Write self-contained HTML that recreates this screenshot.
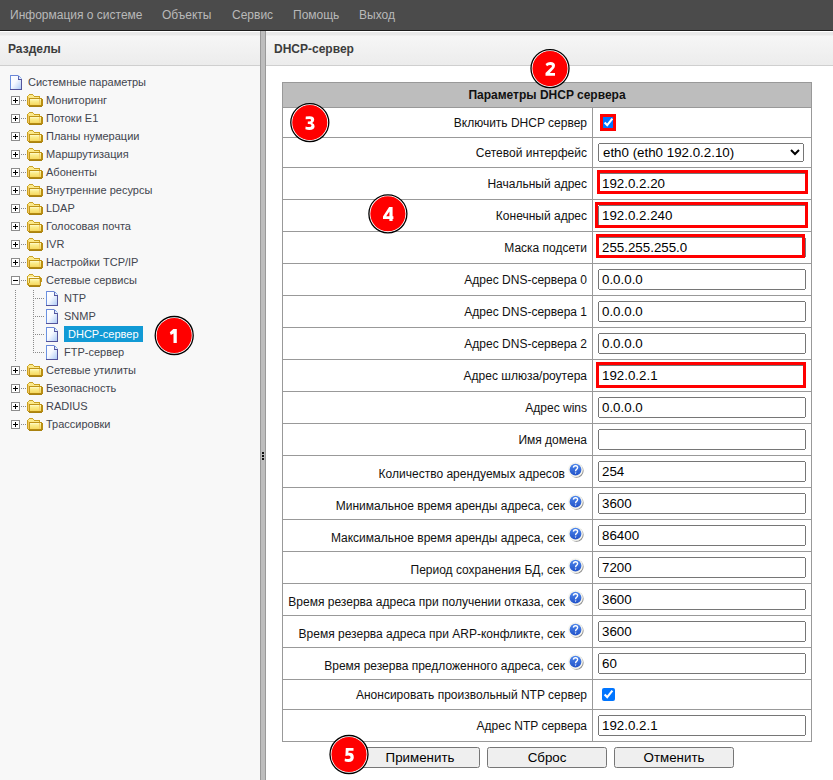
<!DOCTYPE html>
<html><head><meta charset="utf-8">
<style>
*{box-sizing:border-box}
html,body{margin:0;padding:0;width:833px;height:780px;overflow:hidden;background:#fff;font-family:"Liberation Sans",sans-serif}
#top{position:absolute;left:0;top:0;width:833px;height:31px;background:#4b4b4b;border-bottom:1px solid #1c1c1c}
#top span{position:absolute;top:8px;font-size:12px;color:#b9b9b9;line-height:15px}
#left{position:absolute;left:0;top:31px;width:260px;height:749px;background:#f8f8f8}
#right{position:absolute;left:266px;top:31px;width:567px;height:749px;background:#fff}
.ph{position:absolute;left:0;top:0;right:0;height:35px;border-top:1px solid #fff;border-bottom:1px solid #cfcfcf;background:linear-gradient(#e9e9e9 0,#e9e9e9 3px,#f6f6f6 4px,#ececec 100%)}
.ph b{position:absolute;left:8px;top:10px;font-size:12px;color:#3c3c3c;line-height:14px}
#split{position:absolute;left:260px;top:31px;width:6px;height:749px;background:#bdbdbd;border-left:1px solid #999;border-right:1px solid #999}
#split i{position:absolute;left:1px;width:2px;height:2px;background:#111}
.ic{position:absolute;overflow:visible}
.tt{position:absolute;font-size:11px;line-height:18px;color:#42454e;white-space:nowrap}
.tt.sel{background:#119ad5;color:#fff;line-height:16px;height:16px;padding:0 4px;width:79px}
.dh{position:absolute;height:1px;background:repeating-linear-gradient(to right,#8a8a8a 0 1px,transparent 1px 2px)}
.dv{position:absolute;width:1px;background:repeating-linear-gradient(to bottom,#8a8a8a 0 1px,transparent 1px 2px)}
#tbl{position:absolute;left:282px;top:82px;width:530px;height:660px;border:1px solid #999}
#tbl .hd{position:absolute;left:0;top:0;width:528px;height:25px;background:#bdbdbd;text-align:center;font-weight:bold;font-size:12px;line-height:25px;color:#111}
.hl{position:absolute;left:282px;width:530px;height:1px;background:#999}
.vl{position:absolute;left:592px;top:107px;width:1px;height:634px;background:#999}
.lb{position:absolute;left:283px;width:309px;padding-right:5px;display:flex;line-height:14px;align-items:center;justify-content:flex-end;font-size:12px;color:#111;white-space:nowrap}
.lbh{align-items:flex-start;padding-top:11px}
.hp{margin-left:3px;margin-right:3px;position:relative;top:-5px;flex:none}
input.cb{position:absolute;left:598px;margin:0 0 0 4px;width:13px;height:13px}
input,select,button{font-family:"Liberation Sans",sans-serif;font-size:13.3333px}
input.in{position:absolute;left:598px;width:208px;height:21px;box-sizing:border-box}
select.sl{position:absolute;left:598px;width:206px;height:19px;box-sizing:border-box}
button.bt{position:absolute;top:747px;width:120px;height:21px;box-sizing:border-box}
.bdg{position:absolute;width:39px;height:39px;border-radius:50%;background:#f00;border:2px solid #222;box-shadow:inset 0 0 0 1px #fff;color:#fff;font-weight:bold;font-size:19px;line-height:35px;text-align:center}
.rb{position:absolute;border:3px solid #f00}
</style></head><body>
<svg width="0" height="0" style="position:absolute">
<defs>
<linearGradient id="gd" x1="0" y1="0" x2="1" y2="1"><stop offset="0" stop-color="#fff"/><stop offset="0.45" stop-color="#f6f9ff"/><stop offset="1" stop-color="#aecbf6"/></linearGradient>
<linearGradient id="gf" x1="0" y1="0" x2="0" y2="1"><stop offset="0" stop-color="#fffbd0"/><stop offset="0.3" stop-color="#fbee90"/><stop offset="1" stop-color="#f6d85e"/></linearGradient>
<linearGradient id="gh" x1="0" y1="0" x2="0" y2="1"><stop offset="0" stop-color="#4d86ec"/><stop offset="1" stop-color="#2152c8"/></linearGradient>
<symbol id="doc" viewBox="0 0 12 15" shape-rendering="crispEdges"><path d="M1 1 H8 V4 H11 V14 H1 Z" fill="url(#gd)"/><rect x="0" y="0" width="8" height="1" fill="#6c86d6"/><rect x="0" y="0" width="1" height="15" fill="#6b92e2"/><rect x="0" y="14" width="12" height="1" fill="#52529a"/><rect x="11" y="4" width="1" height="10" fill="#54549c"/><rect x="8" y="1" width="1" height="3" fill="#5c68b4"/><rect x="8" y="4" width="4" height="1" fill="#54549c"/><rect x="8" y="0" width="1" height="1" fill="#a9c0ee"/><rect x="9" y="1" width="1" height="1" fill="#7fa6ec"/><rect x="10" y="2" width="1" height="1" fill="#8fb2ee"/><rect x="11" y="3" width="1" height="1" fill="#b9cff2"/><rect x="9" y="2" width="1" height="2" fill="#dfe9fb"/><rect x="10" y="3" width="1" height="1" fill="#e8effc"/></symbol>
<symbol id="plus" viewBox="0 0 9 9"><rect x="0.5" y="0.5" width="8" height="8" fill="#fff" stroke="#8c8c8c"/><path d="M2 4.5 H7 M4.5 2 V7" stroke="#000" stroke-width="1"/></symbol>
<symbol id="minus" viewBox="0 0 9 9"><rect x="0.5" y="0.5" width="8" height="8" fill="#fff" stroke="#8c8c8c"/><path d="M2 4.5 H7" stroke="#000" stroke-width="1"/></symbol>
<symbol id="fold" viewBox="0 0 16 13" shape-rendering="crispEdges"><path d="M1 2 H2 V1 H6 V2 H7 V3 H12 V4 H13 V11 H1 Z" fill="#fbe98a"/><rect x="2" y="0" width="4" height="1" fill="#c9a228"/><rect x="1" y="1" width="1" height="1" fill="#d3ad3a"/><rect x="6" y="1" width="1" height="1" fill="#d3ad3a"/><rect x="0" y="2" width="1" height="9" fill="#c9a020"/><rect x="7" y="2" width="6" height="1" fill="#c9a020"/><rect x="12" y="3" width="1" height="1" fill="#c9a020"/><rect x="1" y="3" width="1" height="8" fill="#f5c860"/><rect x="2" y="4" width="13" height="1" fill="#bf9418"/><rect x="3" y="5" width="11" height="6" fill="url(#gf)"/><rect x="2" y="5" width="1" height="6" fill="#c49a1c"/><rect x="14" y="5" width="2" height="6" fill="#b98e14"/><rect x="12" y="5" width="1" height="6" fill="#f3cf6a"/><rect x="1" y="11" width="15" height="1" fill="#b48a12"/><rect x="2" y="12" width="13" height="1" fill="#a98210"/></symbol>
<symbol id="fopen" viewBox="0 0 16 13" shape-rendering="crispEdges"><path d="M1 2 H2 V1 H6 V2 H7 V3 H12 V4 H13 V11 H1 Z" fill="#fbe98a"/><rect x="2" y="0" width="4" height="1" fill="#c9a228"/><rect x="1" y="1" width="1" height="1" fill="#d3ad3a"/><rect x="6" y="1" width="1" height="1" fill="#d3ad3a"/><rect x="0" y="2" width="1" height="9" fill="#c9a020"/><rect x="7" y="2" width="6" height="1" fill="#c9a020"/><rect x="12" y="3" width="2" height="1" fill="#c9a020"/><rect x="1" y="3" width="11" height="1" fill="#fffbe0"/><rect x="2" y="4" width="12" height="1" fill="#bf9418"/><rect x="14" y="4" width="1" height="4" fill="#c49a1c"/><path d="M3 5 H13 V11 H2 V9 H3 Z" fill="url(#gf)"/><rect x="2" y="5" width="1" height="4" fill="#c49a1c"/><rect x="1" y="9" width="1" height="2" fill="#c49a1c"/><rect x="13" y="5" width="1" height="7" fill="#b98e14"/><rect x="12" y="5" width="1" height="6" fill="#f3cf6a"/><rect x="1" y="11" width="13" height="1" fill="#b48a12"/><rect x="2" y="12" width="11" height="1" fill="#a98210"/></symbol>
<symbol id="help" viewBox="0 0 16 16"><circle cx="8.6" cy="8.8" r="7" fill="#6a6a6a" opacity="0.75"/><circle cx="7.5" cy="7.7" r="7.4" fill="#f4f4ee"/><circle cx="7.5" cy="7.7" r="5.9" fill="url(#gh)"/><path d="M5.4 5.6 Q5.5 3.7 7.6 3.7 Q9.6 3.7 9.6 5.5 Q9.6 6.6 8.5 7.3 Q7.6 7.9 7.6 9.2" fill="none" stroke="#fff" stroke-width="1.4"/><path d="M6.7 10.4 H8.5 L7.6 12 Z" fill="#fff"/></symbol>
</defs>
</svg>
<div id="top">
<span style="left:10px">Информация о системе</span>
<span style="left:162px">Объекты</span>
<span style="left:232px">Сервис</span>
<span style="left:293px">Помощь</span>
<span style="left:359px">Выход</span>
</div>
<div id="left">
<div class="ph"><b>Разделы</b></div>
</div>
<div id="split"><i style="top:421px"></i><i style="top:424px"></i><i style="top:427px"></i></div>
<div id="right">
<div class="ph"><b>DHCP-сервер</b></div>
</div>
<svg class="ic" style="left:10px;top:75px" width="12" height="15"><use href="#doc"/></svg><span class="tt" style="left:28px;top:73px">Системные параметры</span>
<svg class="ic" style="left:11px;top:96px" width="9" height="9"><use href="#plus"/></svg><i class="dh" style="left:21px;top:100px;width:6px"></i><svg class="ic" style="left:27px;top:94px" width="16" height="13"><use href="#fold"/></svg><span class="tt" style="left:46px;top:91px">Мониторинг</span>
<svg class="ic" style="left:11px;top:114px" width="9" height="9"><use href="#plus"/></svg><i class="dh" style="left:21px;top:118px;width:6px"></i><svg class="ic" style="left:27px;top:112px" width="16" height="13"><use href="#fold"/></svg><span class="tt" style="left:46px;top:109px">Потоки E1</span>
<svg class="ic" style="left:11px;top:132px" width="9" height="9"><use href="#plus"/></svg><i class="dh" style="left:21px;top:136px;width:6px"></i><svg class="ic" style="left:27px;top:130px" width="16" height="13"><use href="#fold"/></svg><span class="tt" style="left:46px;top:127px">Планы нумерации</span>
<svg class="ic" style="left:11px;top:150px" width="9" height="9"><use href="#plus"/></svg><i class="dh" style="left:21px;top:154px;width:6px"></i><svg class="ic" style="left:27px;top:148px" width="16" height="13"><use href="#fold"/></svg><span class="tt" style="left:46px;top:145px">Маршрутизация</span>
<svg class="ic" style="left:11px;top:168px" width="9" height="9"><use href="#plus"/></svg><i class="dh" style="left:21px;top:172px;width:6px"></i><svg class="ic" style="left:27px;top:166px" width="16" height="13"><use href="#fold"/></svg><span class="tt" style="left:46px;top:163px">Абоненты</span>
<svg class="ic" style="left:11px;top:186px" width="9" height="9"><use href="#plus"/></svg><i class="dh" style="left:21px;top:190px;width:6px"></i><svg class="ic" style="left:27px;top:184px" width="16" height="13"><use href="#fold"/></svg><span class="tt" style="left:46px;top:181px">Внутренние ресурсы</span>
<svg class="ic" style="left:11px;top:204px" width="9" height="9"><use href="#plus"/></svg><i class="dh" style="left:21px;top:208px;width:6px"></i><svg class="ic" style="left:27px;top:202px" width="16" height="13"><use href="#fold"/></svg><span class="tt" style="left:46px;top:199px">LDAP</span>
<svg class="ic" style="left:11px;top:222px" width="9" height="9"><use href="#plus"/></svg><i class="dh" style="left:21px;top:226px;width:6px"></i><svg class="ic" style="left:27px;top:220px" width="16" height="13"><use href="#fold"/></svg><span class="tt" style="left:46px;top:217px">Голосовая почта</span>
<svg class="ic" style="left:11px;top:240px" width="9" height="9"><use href="#plus"/></svg><i class="dh" style="left:21px;top:244px;width:6px"></i><svg class="ic" style="left:27px;top:238px" width="16" height="13"><use href="#fold"/></svg><span class="tt" style="left:46px;top:235px">IVR</span>
<svg class="ic" style="left:11px;top:258px" width="9" height="9"><use href="#plus"/></svg><i class="dh" style="left:21px;top:262px;width:6px"></i><svg class="ic" style="left:27px;top:256px" width="16" height="13"><use href="#fold"/></svg><span class="tt" style="left:46px;top:253px">Настройки TCP/IP</span>
<svg class="ic" style="left:11px;top:276px" width="9" height="9"><use href="#minus"/></svg><i class="dh" style="left:21px;top:280px;width:6px"></i><svg class="ic" style="left:27px;top:274px" width="16" height="13"><use href="#fopen"/></svg><span class="tt" style="left:46px;top:271px">Сетевые сервисы</span>
<i class="dh" style="left:35px;top:298px;width:9px"></i><svg class="ic" style="left:46px;top:291px" width="12" height="15"><use href="#doc"/></svg>
<span class="tt" style="left:64px;top:289px">NTP</span>
<i class="dh" style="left:35px;top:316px;width:9px"></i><svg class="ic" style="left:46px;top:309px" width="12" height="15"><use href="#doc"/></svg>
<span class="tt" style="left:64px;top:307px">SNMP</span>
<i class="dh" style="left:35px;top:334px;width:9px"></i><svg class="ic" style="left:46px;top:327px" width="12" height="15"><use href="#doc"/></svg>
<span class="tt sel" style="left:64px;top:326px">DHCP-сервер</span>
<i class="dh" style="left:35px;top:352px;width:9px"></i><svg class="ic" style="left:46px;top:345px" width="12" height="15"><use href="#doc"/></svg>
<span class="tt" style="left:64px;top:343px">FTP-сервер</span>
<svg class="ic" style="left:11px;top:366px" width="9" height="9"><use href="#plus"/></svg><i class="dh" style="left:21px;top:370px;width:6px"></i><svg class="ic" style="left:27px;top:364px" width="16" height="13"><use href="#fold"/></svg><span class="tt" style="left:46px;top:361px">Сетевые утилиты</span>
<svg class="ic" style="left:11px;top:384px" width="9" height="9"><use href="#plus"/></svg><i class="dh" style="left:21px;top:388px;width:6px"></i><svg class="ic" style="left:27px;top:382px" width="16" height="13"><use href="#fold"/></svg><span class="tt" style="left:46px;top:379px">Безопасность</span>
<svg class="ic" style="left:11px;top:402px" width="9" height="9"><use href="#plus"/></svg><i class="dh" style="left:21px;top:406px;width:6px"></i><svg class="ic" style="left:27px;top:400px" width="16" height="13"><use href="#fold"/></svg><span class="tt" style="left:46px;top:397px">RADIUS</span>
<svg class="ic" style="left:11px;top:420px" width="9" height="9"><use href="#plus"/></svg><i class="dh" style="left:21px;top:424px;width:6px"></i><svg class="ic" style="left:27px;top:418px" width="16" height="13"><use href="#fold"/></svg><span class="tt" style="left:46px;top:415px">Трассировки</span>
<i class="dv" style="left:15px;top:290px;height:72px"></i>
<i class="dv" style="left:33px;top:290px;height:63px"></i>
<div id="tbl"><div class="hd">Параметры DHCP сервера</div></div>
<i class="vl"></i>
<i class="hl" style="top:107px"></i>
<div class="lb" style="top:108px;height:29px"><span>Включить DHCP сервер</span></div>
<input type="checkbox" checked class="cb" style="top:116px">
<i class="hl" style="top:137px"></i>
<div class="lb" style="top:138px;height:29px"><span>Сетевой интерфейс</span></div>
<select class="sl" style="top:143px"><option>eth0 (eth0 192.0.2.10)</option></select>
<i class="hl" style="top:167px"></i>
<div class="lb" style="top:168px;height:31px"><span>Начальный адрес</span></div>
<input class="in" style="top:173px" value="192.0.2.20">
<i class="hl" style="top:199px"></i>
<div class="lb" style="top:200px;height:31px"><span>Конечный адрес</span></div>
<input class="in" style="top:205px" value="192.0.2.240">
<i class="hl" style="top:231px"></i>
<div class="lb" style="top:232px;height:31px"><span>Маска подсети</span></div>
<input class="in" style="top:237px" value="255.255.255.0">
<i class="hl" style="top:263px"></i>
<div class="lb" style="top:264px;height:31px"><span>Адрес DNS-сервера 0</span></div>
<input class="in" style="top:269px" value="0.0.0.0">
<i class="hl" style="top:295px"></i>
<div class="lb" style="top:296px;height:31px"><span>Адрес DNS-сервера 1</span></div>
<input class="in" style="top:301px" value="0.0.0.0">
<i class="hl" style="top:327px"></i>
<div class="lb" style="top:328px;height:31px"><span>Адрес DNS-сервера 2</span></div>
<input class="in" style="top:333px" value="0.0.0.0">
<i class="hl" style="top:359px"></i>
<div class="lb" style="top:360px;height:31px"><span>Адрес шлюза/роутера</span></div>
<input class="in" style="top:365px" value="192.0.2.1">
<i class="hl" style="top:391px"></i>
<div class="lb" style="top:392px;height:31px"><span>Адрес wins</span></div>
<input class="in" style="top:397px" value="0.0.0.0">
<i class="hl" style="top:423px"></i>
<div class="lb" style="top:424px;height:31px"><span>Имя домена</span></div>
<input class="in" style="top:429px" value="">
<i class="hl" style="top:455px"></i>
<div class="lb lbh" style="top:456px;height:31px"><span>Количество арендуемых адресов</span><svg class="hp" width="16" height="16"><use href="#help"/></svg></div>
<input class="in" style="top:461px" value="254">
<i class="hl" style="top:487px"></i>
<div class="lb lbh" style="top:488px;height:31px"><span>Минимальное время аренды адреса, сек</span><svg class="hp" width="16" height="16"><use href="#help"/></svg></div>
<input class="in" style="top:493px" value="3600">
<i class="hl" style="top:519px"></i>
<div class="lb lbh" style="top:520px;height:31px"><span>Максимальное время аренды адреса, сек</span><svg class="hp" width="16" height="16"><use href="#help"/></svg></div>
<input class="in" style="top:525px" value="86400">
<i class="hl" style="top:551px"></i>
<div class="lb lbh" style="top:552px;height:31px"><span>Период сохранения БД, сек</span><svg class="hp" width="16" height="16"><use href="#help"/></svg></div>
<input class="in" style="top:557px" value="7200">
<i class="hl" style="top:583px"></i>
<div class="lb lbh" style="top:584px;height:31px"><span>Время резерва адреса при получении отказа, сек</span><svg class="hp" width="16" height="16"><use href="#help"/></svg></div>
<input class="in" style="top:589px" value="3600">
<i class="hl" style="top:615px"></i>
<div class="lb lbh" style="top:616px;height:31px"><span>Время резерва адреса при ARP-конфликте, сек</span><svg class="hp" width="16" height="16"><use href="#help"/></svg></div>
<input class="in" style="top:621px" value="3600">
<i class="hl" style="top:647px"></i>
<div class="lb lbh" style="top:648px;height:31px"><span>Время резерва предложенного адреса, сек</span><svg class="hp" width="16" height="16"><use href="#help"/></svg></div>
<input class="in" style="top:653px" value="60">
<i class="hl" style="top:679px"></i>
<div class="lb" style="top:680px;height:29px"><span>Анонсировать произвольный NTP сервер</span></div>
<input type="checkbox" checked class="cb" style="top:688px">
<i class="hl" style="top:709px"></i>
<div class="lb" style="top:710px;height:31px"><span>Адрес NTP сервера</span></div>
<input class="in" style="top:715px" value="192.0.2.1">
<i class="hl" style="top:741px"></i>
<button class="bt" style="left:360px">Применить</button>
<button class="bt" style="left:487px">Сброс</button>
<button class="bt" style="left:614px">Отменить</button>
<div class="rb" style="left:600px;top:114px;width:16px;height:17px"></div>
<div class="rb" style="left:597px;top:170px;width:211px;height:24px"></div>
<div class="rb" style="left:595px;top:202px;width:213px;height:26px"></div>
<div class="rb" style="left:596px;top:234px;width:209px;height:24px"></div>
<div class="rb" style="left:596px;top:362px;width:210px;height:26px"></div>
<svg style="position:absolute;left:0;top:0" width="833" height="780">
<g fill="#f00" stroke="#fff" stroke-width="1.1">
<circle cx="174.2" cy="335.5" r="18.1"/>
<circle cx="550" cy="68.6" r="18.1"/>
<circle cx="309.8" cy="122.6" r="18.1"/>
<circle cx="387.9" cy="213.8" r="18.1"/>
<circle cx="349" cy="754.5" r="18.1"/>
</g>
<g fill="none" stroke="#000" stroke-width="1.3">
<circle cx="174.2" cy="335.5" r="19"/>
<circle cx="550" cy="68.6" r="19"/>
<circle cx="309.8" cy="122.6" r="19"/>
<circle cx="387.9" cy="213.8" r="19"/>
<circle cx="349" cy="754.5" r="19"/>
</g>
<g fill="#fff">
<path d="M173.3 329 H176.8 V343 H173.5 V333.4 L170.8 335.1 L169.8 332.3 Z"/>
<path d="M545.5 73 L550.6 68 Q552 66.6 552 65.9 Q552 64.9 550.2 64.9 Q548.6 64.9 547 66.3 L545.5 63.9 Q547.6 62.1 550.4 62.1 Q555 62.1 555 65.7 Q555 67.6 553.2 69.3 L549.8 72.9 H555 V75.8 H545.5 Z"/>
<path d="M305.6 119.3 L305.8 116.6 Q307.6 116.3 309.6 116.3 Q314.2 116.3 314.2 119.7 Q314.2 121.8 312.2 122.9 Q314.6 123.8 314.6 126.3 Q314.6 129.9 309.4 129.9 Q307.3 129.9 305.4 129.3 L305.6 126.5 Q307.2 127.1 309.1 127.1 Q311.5 127.1 311.5 125.5 Q311.5 124 309.2 124 H307.8 V121.6 H309.2 Q311.1 121.6 311.1 120.2 Q311.1 119 309.5 119 Q307.6 119 305.6 119.3 Z"/>
<path fill-rule="evenodd" d="M389.1 207.1 H392.6 V216.2 H393.4 V219 H392.6 V220.9 H389.4 V219 H383 V216.5 Z M386.2 216.2 H389.4 V211.4 Z"/>
<path d="M345.8 747.9 H353.5 V750.7 H348.6 L348.4 752.9 Q348.9 752.8 349.4 752.8 Q353.8 752.8 353.8 757.2 Q353.8 761.9 348.4 761.9 Q346.3 761.9 344.6 761.2 L344.9 758.4 Q346.6 759.1 348.4 759.1 Q350.6 759.1 350.6 757.3 Q350.6 755.5 348.3 755.5 Q346.8 755.5 345.4 755.9 Z"/>
</g>
</svg>
</body></html>
